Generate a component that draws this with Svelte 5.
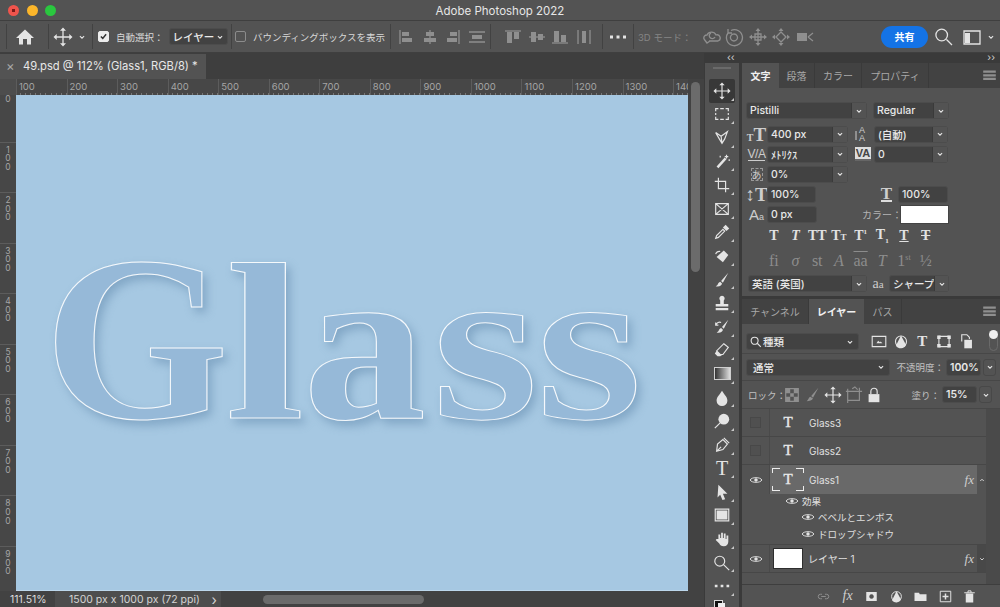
<script lang="ts">
	const icons: Record<string, [string, string]> = {
		home: ['M10 2.5 19 11h-3v6.500h-4V12H8v5.500H4V11H1z', ''],
		move: ['M10 .5l3 3.200H7zM10 19.500l3-3.200H7zM.5 10l3.200-3v6zM19.500 10l-3.200-3v6z', 'M10 3v14M3 10h14'],
		chev: ['', 'M6.500 8.500 10 12l3.500-3.500'],
		up: ['', 'M6.500 12 10 8.500l3.500 3.500'],
		alignL: ['M6 5h7v4H6zM6 11h10v4H6z', 'M4 3v14'],
		alignC: ['M6 5h8v4H6zM4 11h12v4H4z', 'M10 3v14'],
		alignR: ['M7 5h7v4H7zM4 11h10v4H4z', 'M16 3v14'],
		alignM: ['M5 8h10v4H5z', 'M2 5h16M2 15h16'],
		top: ['M4 5h5v11H4zM11 5h5v7h-5z', 'M2 4h16'],
		mid: ['M4 5h5v10H4zM11 7h5v6h-5z', 'M2 10h16'],
		bot: ['M4 4h5v11H4zM11 8h5v7h-5z', 'M2 16h16'],
		dist: ['M8 4h4v12H8z', 'M4 3v14M16 3v14'],
		dots: ['M2 8.500h3v3H2zM8.500 8.500h3v3h-3zM15 8.500h3v3h-3z', ''],
		orbit: ['', 'M3 12a3 3 0 0 1 3-4 5 5 0 0 1 9 0 3 3 0 0 1 2 6H8M10 6a3 3 0 1 0 4 4M3 12l3 4 3-2'],
		roll: ['', 'M4 6a8 8 0 1 0 3-2.500M10 7a3.500 3.500 0 1 1-.1 0M4 2v4h4'],
		pan: ['M10 1l2.500 3h-5zM10 19l2.500-3h-5zM1 10l3-2.500v5zM19 10l-3-2.500v5z', 'M7 7h6v6H7zM10 4v12M4 10h12'],
		slide: ['M10 1l2.500 3h-5zM10 19l2.500-3h-5zM1 10l3-2.500v5zM19 10l-3-2.500v5z', 'M10 5l5 5-5 5-5-5z'],
		cam: ['M2 6h10v8H2z', 'M13 10l5-4M13 10l5 4'],
		search: ['', 'M12.500 12.500 18 18M13.500 8a5.800 5.800 0 1 1-11.600 0 5.800 5.800 0 0 1 11.600 0z'],
		work: ['M3 6h5v10H3z', 'M2 4h16v13H2z'],
		marquee: ['', 'M3 7V4h3M8 4h4M14 4h3v3M17 9v2M17 13v3h-3M12 16H8M6 16H3v-3M3 11V9'],
		lasso: ['', 'M3 4l6 4 7-5-3 8-3 5-3-5zM9 8l1 8'],
		wand: ['M13 5l-9 10 2 2 9-10z', 'M15 2v4M13 4h4M18 7v2M8 3v2'],
		crop: ['', 'M6 2v12h12M2 6h12v12'],
		frame: ['', 'M3 4h14v12H3zM3 4l14 12M17 4 3 16'],
		dropper: ['M11 5l2-2 1-1 4 4-3 3z', 'M11 7l-7 7-1 3 3-1 7-7z'],
		heal: ['M12 4l5 5-6 8-7-6z', 'M3 8a4 4 0 0 1 5-3'],
		brush: ['M17 2 9 11l2 2zM8 12c-3 1-2 4-5 5 4 1 7-1 7-3z', ''],
		stamp: ['M10 2a3 3 0 0 1 2 5.200V11h5v3H3v-3h5V7.200A3 3 0 0 1 10 2zM3 15.500h14V18H3z', ''],
		hist: ['M17 2l-7 8 2 2zM9 11c-3 1-2 4-5 5 4 1 7-1 7-3z', 'M3 8c1-3 4-4 6-3M3 5v3h3'],
		eraser: ['M4 11l4 4h3l-3 2H5L2 14z', 'M12 3l5 4-6 8H8l-4-4z'],
		drop: ['M10 2c3 5 6 7 6 11a6 6 0 0 1-12 0c0-4 3-6 6-11z', ''],
		dodge: ['M12 2a6 6 0 1 1 0 12 6 6 0 0 1 0-12z', 'M8 12l-6 6'],
		pen: ['M10 12l1-1', 'M4 17l1-8 6-5 5 5-5 6zM4 17l5-5M12 2l6 6'],
		arrow: ['M6 2l10 10h-5l2.500 6-3 1-2.500-6L5 16z', ''],
		rect: ['M4 5h12v10H4z', 'M2.500 3.500h15v13h-15z'],
		hand: ['M6 10V5h2v4h1V3h2v6h1V4h2v6h1V6h2v7c0 3-2 5-5 5s-4-1-5-3L3 11l1-1z', ''],
		zoom: ['', 'M12 12l6 6M13 8a5.500 5.500 0 1 1-11 0 5.500 5.500 0 0 1 11 0z'],
		eye: ['M10 7.500a2.500 2.500 0 1 1 0 5 2.500 2.500 0 0 1 0-5z', 'M1.500 10C4 5.500 16 5.500 18.500 10 16 14.500 4 14.500 1.500 10z'],
		menu: ['M3 4h14v2.500H3zM3 8h14v2.500H3zM3 12h14v2.500H3z', ''],
		img: ['M7 12l2-3 2 2 1-1 2 2z', 'M2 4h16v12H2z'],
		half: ['M10 3 4 15a7 7 0 0 0 12-1z', 'M16.500 10a6.500 6.500 0 1 1-13 0 6.500 6.500 0 0 1 13 0z'],
		shape: ['M2 3h4v4H2zM14 3h4v4h-4zM2 13h4v4H2zM14 13h4v4h-4z', 'M4 4h12v12H4z'],
		smart: ['M8 8h9v10H8z', 'M5 10V2h6l3 3v2'],
		checker: ['M3 3h5v5H3zM12 3h5v5h-5zM8 8h4v4H8zM3 12h5v5H3zM12 12h5v5h-5z', 'M3 3h14v14H3z'],
		paint: ['M16 2 8 11l2 2zM7 12c-2 1-2 3-4 5 3 0 6-1 7-3z', ''],
		artboard: ['', 'M3 6h13v10H3zM3 3v16M16 2v6M1 6h18M8 3l3-2 3 3'],
		lock: ['M4 9h12v9H4z', 'M6.500 9V6a3.500 3.500 0 0 1 7 0v3'],
		link: ['', 'M8 7H6a3 3 0 0 0 0 6h2M12 7h2a3 3 0 0 1 0 6h-2M7 10h6'],
		mask: ['M3 4h14v12H3zM10 7a3 3 0 1 0 .1 0z', ''],
		folder: ['M2 5h6l1 2h9v9H2z', ''],
		plus: ['M9 6h2v3h3v2h-3v3H9v-3H6V9h3z', 'M3 3h14v14H3z'],
		trash: ['M5 6h10v12H5z', 'M3 5h14M8 5V2.500h4V5M8 9v6M12 9v6']
	};
	const tools = ['move', 'marquee', 'lasso', 'wand', 'crop', 'frame', 'dropper', 'heal', 'brush', 'stamp', 'hist', 'eraser', 'gradient', 'drop', 'dodge', 'pen', 'type', 'arrow', 'rect', 'hand', 'zoom', 'dots'];
	const rulerX = [100, 200, 300, 400, 500, 600, 700, 800, 900, 1000, 1100, 1200, 1300, 1400];
	const rulerY = [0, 100, 200, 300, 400, 500, 600, 700, 800, 900];
	const footer: [string, boolean][] = [['link', true], ['fx', false], ['mask', false], ['half', false], ['folder', false], ['plus', false], ['trash', false]];
</script>

{#snippet ic(name: string, dim = false, small = false)}
	<svg class="ic" class:dim class:small viewBox="0 0 20 20" aria-hidden="true">
		{#if icons[name][0]}<path class="fil" d={icons[name][0]} />{/if}
		{#if icons[name][1]}<path class="str" d={icons[name][1]} />{/if}
	</svg>
{/snippet}

{#snippet field(text: string, width: number, dropdown = true)}
	<div class="field" style="width:{width}px">
		<span class="val">{text}</span>
		{#if dropdown}<span class="dd">{@render ic('chev', false, true)}</span>{/if}
	</div>
{/snippet}

<div class="app">
	<header class="title">Adobe Photoshop 2022
		<div class="lights"><i class="r"></i><i class="y"></i><i class="g"></i></div>
	</header>

	<div class="options">
		<div class="opt home">{@render ic('home')}</div>
		<div class="opt mv">{@render ic('move')}{@render ic('chev', false, true)}</div>
		<div class="opt auto">
			<span class="check on">
				<svg viewBox="0 0 12 12"><path d="M2.500 6 5 8.500 9.500 3" /></svg>
			</span>
			<span class="lbl">自動選択：</span>
			<div class="field sel-auto"><span class="val">レイヤー</span>{@render ic('chev', false, true)}</div>
		</div>
		<div class="opt bbox"><span class="check"></span><span class="lbl">バウンディングボックスを表示</span></div>
		<div class="opt group g1">{@render ic('alignL', true)}{@render ic('alignC', true)}{@render ic('alignR', true)}{@render ic('alignM', true)}</div>
		<div class="opt group g2">{@render ic('top', true)}{@render ic('mid', true)}{@render ic('bot', true)}{@render ic('dist', true)}</div>
		<div class="opt more">{@render ic('dots')}</div>
		<div class="opt group g3"><span class="lbl dimtxt">3D モード：</span>{@render ic('orbit', true)}{@render ic('roll', true)}{@render ic('pan', true)}{@render ic('slide', true)}{@render ic('cam', true)}</div>
		<div class="right">
			<button class="share">共有</button>
			{@render ic('search')}
			{@render ic('work')}
			<span class="rchev">{@render ic('chev', false, true)}</span>
		</div>
	</div>

	<div class="main">
		<section class="doc">
			<div class="tabstrip">
				<div class="tab"><span class="x">×</span>49.psd @ 112% (Glass1, RGB/8) *</div>
			</div>
			<div class="docbody">
				<div class="docleft">
					<div class="rulerx">
						<div class="corner"></div>
						{#each rulerX as n}<span class="tick">{n}</span>{/each}
					</div>
					<div class="docrow">
						<div class="rulery">
							{#each rulerY as n}
								<div class="ytick">{#each String(n) as d}<span>{d}</span>{/each}</div>
							{/each}
						</div>
						<div class="canvas">
							<div class="glass">
								<span class="G">G</span><span class="l">l</span><span class="a">a</span><span class="s">s</span><span class="s2">s</span>
							</div>
						</div>
					</div>
				</div>
				<div class="vscroll"><div class="vthumb"></div></div>
			</div>
			<div class="status">
				<span class="zoomval">111.51%</span>
				<div class="info">1500 px x 1000 px (72 ppi)<span class="gt">›</span></div>
				<div class="hthumb"></div>
			</div>
		</section>

		<section class="side">
			<div class="strip"><span>‹‹</span><span>››</span></div>
			<div class="siderow">
				<nav class="tools">
					<div class="grip"></div>
					{#each tools as t, i}
						<div class="tool" class:active={i === 0}>
							{#if t === 'gradient'}
								<span class="grad"></span>
							{:else if t === 'type'}
								<span class="typeT">T</span>
							{:else}
								{@render ic(t)}
							{/if}
							<i class="corner-mark"></i>
						</div>
					{/each}
					<div class="swatches"><i class="blk"></i><i class="wht"></i></div>
				</nav>

				<div class="panels">
					<div class="panel char">
						<div class="tabs">
							<span class="ptab on w1">文字</span><span class="ptab w2">段落</span><span class="ptab w3">カラー</span><span class="ptab w4">プロパティ</span>
							<span class="pmenu">{@render ic('menu', true)}</span>
						</div>
						<div class="cbody">
							<div class="crow r1">
								{@render field('Pistilli', 121)}
								{@render field('Regular', 76)}
							</div>
							<div class="crow r2">
								<span class="ci"><b class="big"><small>T</small>T</b></span>
								{@render field('400 px', 81)}
								<span class="ci c2"><svg viewBox="0 0 18 18"><text x="5" y="8" class="st">A</text><text x="5" y="16" class="st">A</text><path d="M2 6v9" /></svg></span>
								{@render field('(自動)', 74)}
							</div>
							<div class="crow r2">
								<span class="ci"><b class="va">V/A</b></span>
								{@render field('ﾒﾄﾘｸｽ', 81)}
								<span class="ci c2"><b class="tr">VA</b></span>
								{@render field('0', 74)}
							</div>
							<div class="crow r2">
								<span class="ci"><b class="tsu">あ</b></span>
								{@render field('0%', 81)}
							</div>
							<div class="crow r2">
								<span class="ci"><b class="big">↕T</b></span>
								{@render field('100%', 49, false)}
								<span class="ci c3"><b class="big under">T</b></span>
								{@render field('100%', 50, false)}
							</div>
							<div class="crow r2">
								<span class="ci"><b class="basel">A<small>a</small></b></span>
								{@render field('0 px', 50, false)}
								<span class="colorlbl">カラー：</span>
								<span class="swatch"></span>
							</div>
							<div class="styles">
								<b>T</b><i>T</i><b>TT</b><b>T<small>T</small></b><b>T<sup>1</sup></b><b>T<sub>1</sub></b><b><u>T</u></b><b><s>T</s></b>
							</div>
							<div class="styles alt">
								<span>fi</span><i>σ</i><span>st</span><i>A</i><span class="over">aa</span><i>T</i><span>1<sup>st</sup></span><span>½</span>
							</div>
							<div class="crow lang">
								{@render field('英語 (英国)', 119)}
								<span class="aa">a<small>a</small></span>
								{@render field('シャープ', 60)}
							</div>
						</div>
					</div>

					<div class="panel layers">
						<div class="tabs">
							<span class="ptab t1">チャンネル</span><span class="ptab on t2">レイヤー</span><span class="ptab t3">パス</span>
							<span class="pmenu">{@render ic('menu', true)}</span>
						</div>
						<div class="lrow filter">
							<div class="field f-kind">
								{@render ic('search', false, true)}<span class="val">種類</span>{@render ic('chev', false, true)}
							</div>
							<div class="kinds">
								{@render ic('img')}{@render ic('half')}<span class="kt">T</span>{@render ic('shape')}{@render ic('smart')}
							</div>
							<div class="toggle"><i></i></div>
						</div>
						<div class="lrow blend">
							<div class="field f-blend"><span class="val">通常</span>{@render ic('chev', false, true)}</div>
							<span class="op">不透明度：</span>
							<div class="field f-num"><span class="val">100%</span></div>
							<div class="field f-dd">{@render ic('chev', false, true)}</div>
						</div>
						<div class="lrow locks">
							<span class="op lk">ロック：</span>
							<div class="lockicons">{@render ic('checker', true)}{@render ic('paint', true)}{@render ic('move')}{@render ic('artboard', true)}{@render ic('lock')}</div>
							<span class="op fillb">塗り：</span>
							<div class="field f-num"><span class="val">15%</span></div>
							<div class="field f-dd">{@render ic('chev', false, true)}</div>
						</div>
						<div class="lwrap">
							<div class="list">
								<div class="layer">
									<div class="eyec"><span class="vis"></span></div>
									<div class="thumb"><span class="lt">T</span></div>
									<span class="lname">Glass3</span>
								</div>
								<div class="layer">
									<div class="eyec"><span class="vis"></span></div>
									<div class="thumb"><span class="lt">T</span></div>
									<span class="lname">Glass2</span>
								</div>
								<div class="layer sel">
									<div class="eyec">{@render ic('eye')}</div>
									<div class="selbg">
										<div class="thumb brk"><span class="lt">T</span><i class="b1"></i><i class="b2"></i><i class="b3"></i><i class="b4"></i></div>
										<span class="lname">Glass1</span>
										<em class="fx">fx</em>
									</div>
									<div class="cv">{@render ic('up', false, true)}</div>
								</div>
								<div class="effects">
									<div class="eff e0">{@render ic('eye')}<span>効果</span></div>
									<div class="eff e1">{@render ic('eye')}<span>ベベルとエンボス</span></div>
									<div class="eff e1">{@render ic('eye')}<span>ドロップシャドウ</span></div>
								</div>
								<div class="layer">
									<div class="eyec">{@render ic('eye')}</div>
									<div class="white"></div>
									<span class="lname n1">レイヤー 1</span>
									<em class="fx">fx</em>
									<div class="cv dark">{@render ic('chev', false, true)}</div>
								</div>
							</div>
							<div class="lscroll"></div>
						</div>
						<div class="lfoot">
							{#each footer as [n, dim]}
								<span class="fi">
									{#if n === 'fx'}<em class="fx">fx</em>{:else}{@render ic(n, dim)}{/if}
								</span>
							{/each}
						</div>
					</div>
				</div>
			</div>
		</section>
	</div>
</div>

<style>
	:global(body) {
		margin: 0;
		background: #3e3e3e;
	}

	.app {
		width: 1000px;
		height: 607px;
		overflow: hidden;
		display: flex;
		flex-direction: column;
		font-family: Inter, "Noto Sans CJK JP", sans-serif;
		color: #dedede;
		font-size: 10.5px;
		background: #3e3e3e;
	}

	.ic {
		width: 20px;
		height: 20px;
		flex: none;
		display: block;
	}
	.ic.small {
		width: 12px;
		height: 12px;
	}
	.fil {
		fill: #e4e4e4;
	}
	.str {
		fill: none;
		stroke: #e4e4e4;
		stroke-width: 1.3;
	}
	.ic.small .str {
		stroke-width: 1.8;
	}
	.ic.dim .fil {
		fill: #8f8f8f;
	}
	.ic.dim .str {
		stroke: #8f8f8f;
	}

	.title {
		position: relative;
		height: 20px;
		background: #535353;
		border-bottom: 1px solid #3f3f3f;
		text-align: center;
		line-height: 22px;
		font-size: 11.5px;
		color: #e6e6e6;
		flex: none;
	}
	.lights {
		position: absolute;
		left: 8px;
		top: 5px;
		display: flex;
		gap: 7.5px;
	}
	.lights i {
		width: 11px;
		height: 11px;
		border-radius: 50%;
	}
	.lights .r {
		background: radial-gradient(circle, #7a1a18 0 1.5px, #f0544c 2px);
	}
	.lights .y {
		background: #fcb62a;
	}
	.lights .g {
		background: #2ac73f;
	}

	.options {
		height: 31px;
		flex: none;
		background: #535353;
		border-bottom: 1px solid #3f3f3f;
		display: flex;
		align-items: center;
		padding-left: 6px;
	}
	.opt {
		height: 25px;
		display: flex;
		align-items: center;
		border-left: 1px solid #424242;
		box-sizing: border-box;
		flex: none;
	}
	.home {
		width: 42px;
		padding-left: 8px;
	}
	.mv {
		width: 44px;
		padding-left: 4px;
		gap: 3px;
	}
	.auto {
		width: 139px;
		padding-left: 5px;
	}
	.sel-auto {
		width: 59px;
		margin-left: 5px;
		padding-left: 5px;
		padding-right: 1px;
	}
	.bbox {
		width: 159px;
		padding-left: 3px;
	}
	.group {
		gap: 3.5px;
	}
	.g1 {
		width: 100px;
		padding-left: 5px;
	}
	.g2 {
		width: 112px;
		padding-left: 12px;
	}
	.g3 {
		width: 190px;
		padding-left: 4px;
	}
	.more {
		width: 31px;
		padding-left: 5px;
	}
	.lbl {
		font-size: 9.5px;
		color: #d8d8d8;
		white-space: nowrap;
		margin-left: 7px;
	}
	.dimtxt {
		color: #858585;
		margin: 0 6px 0 0;
	}
	.check {
		width: 11px;
		height: 11px;
		box-sizing: border-box;
		border: 1px solid #8c8c8c;
		border-radius: 2px;
		flex: none;
	}
	.check.on {
		background: #ececec;
		border-color: #ececec;
	}
	.check svg {
		display: block;
		fill: none;
		stroke: #333;
		stroke-width: 2;
	}
	.right {
		margin-left: auto;
		display: flex;
		align-items: center;
		margin-right: 3px;
		gap: 8px;
	}
	.rchev {
		margin-left: -5px;
	}
	.share {
		width: 47px;
		height: 22px;
		border: 0;
		border-radius: 11px;
		background: #1473e6;
		color: #fff;
		font: 700 10px "Noto Sans CJK JP", sans-serif;
		margin-right: -2px;
	}

	.main {
		flex: 1;
		display: flex;
		min-height: 0;
	}
	.doc {
		width: 704px;
		flex: none;
		display: flex;
		flex-direction: column;
		background: #424242;
	}
	.tabstrip {
		height: 26px;
		flex: none;
		background: #3e3e3e;
		padding-top: 1px;
		box-sizing: border-box;
	}
	.tab {
		width: 206px;
		height: 25px;
		background: #535353;
		line-height: 25px;
		font-size: 11.2px;
		color: #e8e8e8;
		white-space: nowrap;
		display: flex;
		align-items: center;
	}
	.x {
		color: #a8a8a8;
		width: 23px;
		padding-left: 6px;
		box-sizing: border-box;
		font-size: 13px;
	}
	.docbody {
		height: 512px;
		display: flex;
		flex: none;
	}
	.docleft {
		width: 688px;
		display: flex;
		flex-direction: column;
	}
	.rulerx {
		height: 16px;
		display: flex;
		overflow: hidden;
		background: #474747 repeating-linear-gradient(90deg, #777 0 1px, transparent 1px 5.05px) 0 100% / 100% 2px no-repeat;
		flex: none;
	}
	.corner {
		width: 16px;
		flex: none;
		background: #4d4d4d;
	}
	.tick {
		width: 50.55px;
		flex: none;
		box-sizing: border-box;
		border-left: 1px solid #5c5c5c;
		padding-left: 2px;
		line-height: 15px;
		font-size: 9.5px;
		color: #a5a5a5;
	}
	.docrow {
		flex: 1;
		display: flex;
		min-height: 0;
	}
	.rulery {
		width: 16px;
		flex: none;
		overflow: hidden;
		background: #474747;
	}
	.ytick {
		height: 50.55px;
		box-sizing: border-box;
		border-top: 1px solid #5c5c5c;
		display: flex;
		flex-direction: column;
		align-items: center;
		padding-top: 3px;
		font-size: 8.5px;
		line-height: 8.6px;
		color: #a5a5a5;
	}
	.ytick:first-child {
		margin-top: -4px;
	}
	.canvas {
		flex: 1;
		position: relative;
		background: #a6c8e2;
		overflow: hidden;
		border-bottom: 1px solid #bcd7ec;
	}
	.glass {
		position: absolute;
		left: 0;
		top: 0;
		font: 700 224px/1 "Liberation Serif", serif;
		color: #96b9d8;
		-webkit-text-stroke: 1px rgba(255, 255, 255, 0.9);
		filter: drop-shadow(4px 5px 5px rgba(72, 112, 152, 0.38));
	}
	.glass span {
		position: absolute;
		top: 135px;
		transform-origin: 0 84%;
	}
	.G {
		left: 28px;
		transform: scale(1.06, 1.05);
	}
	.l {
		left: 209px;
		transform: scaleX(1.28);
	}
	.a {
		left: 287px;
		transform: scaleX(1.1);
	}
	.s {
		left: 416px;
		transform: scaleX(1.22);
	}
	.s2 {
		left: 520px;
		transform: scaleX(1.22);
	}
	.vscroll {
		width: 16px;
		background: #424242;
		padding: 3px 3px 0;
		box-sizing: border-box;
	}
	.vthumb {
		height: 190px;
		width: 9px;
		background: #6b6b6b;
		border-radius: 5px;
	}
	.status {
		flex: 1;
		position: relative;
		display: flex;
		align-items: center;
		background: #424242;
		font-size: 10.5px;
		min-height: 0;
	}
	.zoomval {
		width: 55px;
		padding-left: 10px;
		box-sizing: border-box;
		color: #dcdcdc;
	}
	.info {
		width: 166px;
		height: 100%;
		padding-left: 14px;
		box-sizing: border-box;
		background: #4d4d4d;
		color: #d4d4d4;
		display: flex;
		align-items: center;
		position: relative;
	}
	.gt {
		position: absolute;
		right: 4px;
		font-size: 14px;
	}
	.hthumb {
		margin-left: 42px;
		width: 161px;
		height: 9px;
		border-radius: 5px;
		background: #6b6b6b;
	}

	.side {
		flex: 1;
		display: flex;
		flex-direction: column;
		background: #3a3a3a;
		min-width: 0;
	}
	.strip {
		height: 10px;
		flex: none;
		display: flex;
		justify-content: space-between;
		padding: 0 5px 0 23px;
		font-size: 10px;
		line-height: 9px;
		color: #cfcfcf;
	}
	.siderow {
		flex: 1;
		display: flex;
		min-height: 0;
		padding-left: 1px;
	}
	.tools {
		width: 34px;
		flex: none;
		background: #535353;
		display: flex;
		flex-direction: column;
		align-items: center;
		overflow: hidden;
	}
	.grip {
		height: 16px;
		width: 18px;
		flex: none;
		background: linear-gradient(#6a6a6a, #6a6a6a) 0 4px / 100% 2px no-repeat;
	}
	.tool {
		position: relative;
		width: 26px;
		height: 23.6px;
		flex: none;
		display: flex;
		align-items: center;
		justify-content: center;
		border-radius: 2px;
	}
	.tool .ic {
		width: 18px;
		height: 18px;
	}
	.tool.active {
		background: #383838;
	}
	.corner-mark {
		position: absolute;
		right: 1px;
		bottom: 2px;
		width: 0;
		height: 0;
		border-left: 3px solid transparent;
		border-bottom: 3px solid #c8c8c8;
	}
	.grad {
		width: 15px;
		height: 11px;
		border: 1px solid #cfcfcf;
		background: linear-gradient(90deg, #333, #ddd);
	}
	.typeT {
		font: 400 20px/1 "Liberation Serif", serif;
		color: #e4e4e4;
	}
	.swatches {
		position: relative;
		width: 20px;
		height: 14px;
		flex: none;
	}
	.swatches i {
		position: absolute;
		width: 7px;
		height: 7px;
		top: 2px;
	}
	.blk {
		left: 2px;
		background: #111;
		border: 1px solid #ddd;
	}
	.wht {
		left: 6px;
		top: 5px !important;
		background: #eee;
	}

	.panels {
		flex: 1;
		margin-left: 3px;
		display: flex;
		flex-direction: column;
		gap: 3px;
		min-width: 0;
	}
	.panel {
		background: #535353;
	}
	.char {
		height: 233px;
		flex: none;
	}
	.layers {
		flex: 1;
		display: flex;
		flex-direction: column;
		min-height: 0;
	}
	.tabs {
		height: 25px;
		flex: none;
		display: flex;
		background: #424242;
		position: relative;
		font-size: 10px;
		line-height: 26px;
		color: #a9a9a9;
	}
	.ptab {
		text-align: center;
		border-right: 1px solid #3a3a3a;
		box-sizing: border-box;
	}
	.ptab.on {
		background: #535353;
		color: #f0f0f0;
		font-weight: 700;
		border-right: 0;
	}
	.w1 {
		width: 37px;
	}
	.w2 {
		width: 36px;
	}
	.w3 {
		width: 47px;
	}
	.w4 {
		width: 67px;
	}
	.t1 {
		width: 67px;
	}
	.t2 {
		width: 55px;
	}
	.t3 {
		width: 38px;
	}
	.pmenu {
		position: absolute;
		right: 1px;
		top: 4px;
	}
	.pmenu .ic {
		width: 19px;
		height: 18px;
	}

	.cbody {
		padding: 14px 0 0 4px;
	}
	.crow {
		display: flex;
		align-items: center;
	}
	.r1 {
		gap: 6px;
		height: 17px;
		margin-bottom: 5px;
	}
	.r2 {
		height: 20px;
	}
	.field {
		height: 17px;
		flex: none;
		box-sizing: border-box;
		background: #424242;
		border: 1px solid #4c4c4c;
		border-radius: 3px;
		display: flex;
		align-items: center;
		padding-left: 3px;
		font-size: 10.5px;
		font-weight: 500;
		color: #e8e8e8;
		position: relative;
	}
	.val {
		flex: 1;
		white-space: nowrap;
	}
	.dd {
		width: 15px;
		height: 100%;
		background: #535353;
		border-left: 1px solid #3a3a3a;
		box-sizing: border-box;
		display: flex;
		align-items: center;
		justify-content: center;
	}
	.ci {
		width: 21px;
		height: 18px;
		flex: none;
		display: flex;
		align-items: center;
		justify-content: center;
		color: #cdcdcd;
		font-family: "Liberation Serif", serif;
		font-size: 16px;
	}
	.ci svg {
		width: 18px;
		height: 18px;
		fill: none;
		stroke: #cdcdcd;
	}
	.ci .st {
		fill: #cdcdcd;
		stroke: none;
		font: 9px "Liberation Sans", sans-serif;
	}
	.c2 {
		margin: 0 1px 0 5px;
		width: 20px;
	}
	.c3 {
		margin: 0 1px 0 60px;
	}
	.big {
		font-size: 19px;
		line-height: 1;
	}
	.big small {
		font-size: 10px;
	}
	.under {
		border-bottom: 2px solid #ddd;
		font-weight: 700;
		line-height: 13px;
		font-size: 17px;
	}
	.va {
		font: 400 12px "Liberation Sans", sans-serif;
		border-bottom: 1px solid #ccc;
		line-height: 12px;
		letter-spacing: -0.5px;
	}
	.tr {
		font: 700 11px/12px "Liberation Sans", sans-serif;
		background: #ddd;
		color: #444;
		padding: 0 1px;
		border-bottom: 2px solid #666;
	}
	.tsu {
		font: 400 10px "Noto Sans CJK JP", sans-serif;
		border: 1px dashed #999;
		line-height: 11px;
	}
	.basel {
		font: 400 15px "Liberation Sans", sans-serif;
	}
	.basel small {
		font-size: 9px;
	}
	.colorlbl {
		margin-left: 45px;
		width: 38px;
		color: #b4b4b4;
		font-size: 10px;
		white-space: nowrap;
	}
	.swatch {
		width: 49px;
		height: 19px;
		background: #fff;
		border: 1px solid #444;
		box-sizing: border-box;
		flex: none;
	}
	.styles {
		display: grid;
		grid-template-columns: repeat(8, 21.7px);
		margin: 2px 0 0 17px;
		height: 20px;
		align-items: center;
		justify-items: center;
		font: 700 14px "Liberation Serif", serif;
		color: #e2e2e2;
	}
	.styles sup,
	.styles sub {
		font-size: 7px;
	}
	.styles small {
		font-size: 9px;
	}
	.alt {
		font-weight: 400;
		font-size: 16px;
		color: #8c8c8c;
		margin-top: 5px;
		height: 20px;
	}
	.over {
		text-decoration: overline;
	}
	.alt sup {
		font-size: 8px;
	}
	.lang {
		height: 17px;
		margin: 4px 0 0 2px;
	}
	.aa {
		width: 22px;
		text-align: center;
		font: 400 14px "Liberation Serif", serif;
		color: #ccc;
	}
	.aa small {
		font-size: 11px;
	}

	.lrow {
		display: flex;
		align-items: center;
		flex: none;
		box-sizing: border-box;
	}
	.filter {
		height: 30px;
		padding: 6px 0 0 4px;
		border-bottom: 1px solid #474747;
	}
	.f-kind {
		width: 113px;
		gap: 1px;
		padding-right: 2px;
	}
	.kinds {
		display: flex;
		align-items: center;
		gap: 1.7px;
		margin-left: 10px;
		width: 120px;
	}
	.kinds .ic {
		width: 20px;
		height: 17px;
	}
	.kt {
		width: 20px;
		text-align: center;
		font: 700 15px/1 "Liberation Serif", serif;
		color: #e4e4e4;
	}
	.toggle {
		width: 9px;
		height: 19px;
		border: 1px solid #6a6a6a;
		border-radius: 6px;
		box-sizing: border-box;
		position: relative;
	}
	.toggle i {
		position: absolute;
		left: -1px;
		top: -3px;
		width: 9px;
		height: 9px;
		border-radius: 50%;
		background: #eee;
	}
	.blend {
		height: 27px;
		padding-left: 4px;
		border-bottom: 1px solid #474747;
	}
	.f-blend {
		width: 144px;
		padding-left: 6px;
		padding-right: 2px;
	}
	.op {
		color: #c0c0c0;
		font-size: 9.5px;
		white-space: nowrap;
		width: 56px;
		text-align: right;
		padding-right: 2px;
		box-sizing: border-box;
	}
	.f-num {
		width: 35px;
		font-weight: 600;
	}
	.f-dd {
		width: 13px;
		margin-left: 2px;
		padding: 0;
		background: #535353;
		border-color: #484848;
		justify-content: center;
	}
	.locks {
		height: 28px;
		padding-left: 6px;
		border-bottom: 1px solid #474747;
	}
	.lk {
		width: 34px;
		text-align: left;
		padding: 0;
	}
	.lockicons {
		display: flex;
		gap: 2.5px;
		width: 124px;
		padding-left: 1px;
		box-sizing: border-box;
	}
	.lockicons .ic {
		width: 18px;
		height: 18px;
	}
	.fillb {
		width: 36px;
	}
	.lwrap {
		flex: 1;
		display: flex;
		min-height: 0;
		border-bottom: 1px solid #3e3e3e;
	}
	.list {
		flex: 1;
		min-width: 0;
	}
	.lscroll {
		width: 14px;
		background: #4a4a4a;
	}
	.layer {
		height: 28px;
		box-sizing: border-box;
		border-bottom: 1px solid #474747;
		display: flex;
		align-items: center;
		font-size: 10px;
	}
	.eyec {
		width: 28px;
		height: 100%;
		flex: none;
		border-right: 1px solid #4a4a4a;
		box-sizing: border-box;
		display: flex;
		align-items: center;
		justify-content: center;
	}
	.eyec .ic,
	.eff .ic {
		width: 14px;
		height: 14px;
	}
	.vis {
		width: 11px;
		height: 11px;
		background: #505050;
		border: 1px solid #484848;
		box-sizing: border-box;
	}
	.thumb {
		width: 36px;
		height: 100%;
		flex: none;
		display: flex;
		align-items: center;
		justify-content: center;
		position: relative;
	}
	.lt {
		font: 400 15px/1 "Liberation Serif", serif;
		color: #e8e8e8;
		-webkit-text-stroke: 0.4px #e8e8e8;
	}
	.lname {
		margin-left: 3px;
		color: #e0e0e0;
	}
	.sel .selbg {
		flex: 1;
		height: 100%;
		background: #696969;
		display: flex;
		align-items: center;
	}
	.sel {
		height: 29px;
		border-bottom: 0;
	}
	.brk i {
		position: absolute;
		width: 7px;
		height: 4px;
		border: 0 solid #ededed;
	}
	.b1 {
		left: 2px;
		top: 3px;
		border-left-width: 1.5px !important;
		border-top-width: 1.5px !important;
	}
	.b2 {
		right: 2px;
		top: 3px;
		border-right-width: 1.5px !important;
		border-top-width: 1.5px !important;
	}
	.b3 {
		left: 2px;
		bottom: 3px;
		border-left-width: 1.5px !important;
		border-bottom-width: 1.5px !important;
	}
	.b4 {
		right: 2px;
		bottom: 3px;
		border-right-width: 1.5px !important;
		border-bottom-width: 1.5px !important;
	}
	.fx {
		margin-left: auto;
		margin-right: 3px;
		font: italic 400 13px "Liberation Serif", serif;
		color: #cfcfcf;
	}
	.cv {
		width: 9px;
		height: 100%;
		flex: none;
		display: flex;
		align-items: center;
		justify-content: center;
	}
	.cv .ic {
		width: 10px;
		height: 10px;
		flex: none;
	}
	.cv.dark {
		background: #484848;
	}
	.effects {
		height: 51px;
		box-sizing: border-box;
		border-bottom: 1px solid #474747;
	}
	.eff {
		display: flex;
		align-items: center;
		gap: 3px;
		height: 17px;
		font-size: 9.5px;
		color: #e0e0e0;
	}
	.e0 {
		height: 14px;
		padding-left: 43px;
	}
	.e1 {
		padding-left: 59px;
	}
	.white {
		width: 28px;
		height: 19px;
		margin-left: 3px;
		background: #fff;
		border: 1px solid #2e2e2e;
		flex: none;
		margin-right: 5px;
	}
	.n1 {
		margin-left: 0;
	}
	.lfoot {
		height: 22px;
		flex: none;
		display: flex;
		align-items: center;
		padding-left: 69px;
	}
	.fi {
		width: 24.4px;
		display: flex;
		justify-content: center;
		flex: none;
	}
	.fi .ic {
		width: 15px;
		height: 15px;
	}
	.fi .fx {
		margin: 0;
		font-size: 14px;
	}
</style>
